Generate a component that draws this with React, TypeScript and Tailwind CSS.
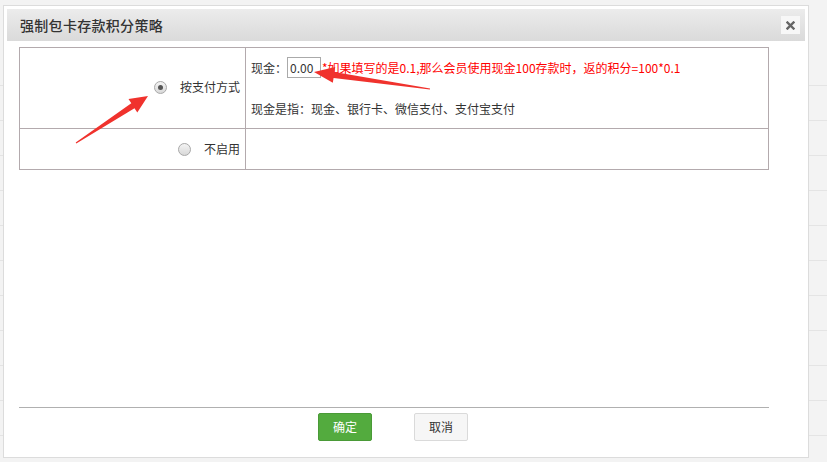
// Forced card deposit points strategy dialog
import React from 'react';

const font = { fontFamily: '"Noto Sans CJK SC", "Microsoft YaHei", "Liberation Sans", sans-serif' };

function Radio({ checked }: { checked?: boolean }) {
  return (
    <span className="w-[13px] h-[13px] rounded-full border border-[#a9a9a9] bg-gradient-to-b from-[#f4f4f4] to-[#d8d8d8] flex items-center justify-center shrink-0">
      {checked && <span className="w-[5px] h-[5px] rounded-full bg-[#555]" />}
    </span>
  );
}

export default function App() {
  const bgRows = Array.from({ length: 13 });

  return (
    <div className="relative w-[827px] h-[462px] overflow-hidden bg-[#f3f3f3] text-[#333]" style={font}>
      {/* page behind the modal */}
      <div className="flex flex-col pt-[51px]">
        {bgRows.map((_, i) => (
          <div key={i} className="h-[35px] border-b border-[#e4e4e4]" />
        ))}
      </div>

      {/* modal */}
      <div className="absolute left-[3px] top-[5px] w-[806px] h-[453px] bg-white border border-[#dcdcdc] p-[3px] flex flex-col">
        <div className="h-[32px] bg-gradient-to-b from-[#ececec] to-[#dadada] flex items-center justify-between pl-[13px] pr-[5px]">
          <span className="text-[14px] font-medium text-[#333] tracking-[0.3px]">强制包卡存款积分策略</span>
          <button className="w-[19px] h-[18px] bg-[#f7f7f7] flex items-center justify-center">
            <svg width="9" height="9" viewBox="0 0 9 9">
              <path d="M1.5 1.5 L7.5 7.5 M7.5 1.5 L1.5 7.5" stroke="#666" strokeWidth="2.4" strokeLinecap="square" />
            </svg>
          </button>
        </div>

        <div className="flex flex-col flex-1 pl-[12px] w-[762px]">
          <table className="mt-[6px] w-[750px] border-collapse text-[12px]">
            <tbody>
              <tr className="h-[81px]">
                <td className="w-[226px] border border-[#b3aaad] pr-[5px]">
                  <div className="flex items-center justify-end gap-[13px] pb-[2px]">
                    <Radio checked />
                    <span>按支付方式</span>
                  </div>
                </td>
                <td className="border border-[#b3aaad] pl-[5px] align-top">
                  <div className="flex items-center mt-[9px] h-[21px]">
                    <span>现金：</span>
                    <input
                      readOnly
                      value="0.00"
                      className="w-[34px] h-[21px] border border-[#aaa] px-[2px] text-[12px] outline-none"
                      style={font}
                    />
                    <span className="text-[#ff0000] ml-[1px]">*如果填写的是0.1,那么会员使用现金100存款时，返的积分=100*0.1</span>
                  </div>
                  <div className="mt-[22px]">现金是指：现金、银行卡、微信支付、支付宝支付</div>
                </td>
              </tr>
              <tr className="h-[41px]">
                <td className="border border-[#b3aaad] pr-[5px]">
                  <div className="flex items-center justify-end gap-[13px]">
                    <Radio />
                    <span>不启用</span>
                  </div>
                </td>
                <td className="border border-[#b3aaad]" />
              </tr>
            </tbody>
          </table>

          <div className="flex-1" />
          <div className="h-px w-[750px] bg-[#b0b0b0]" />
          <div className="flex gap-[42px] pl-[299px] mt-[5px] mb-[13px]">
            <button className="w-[54px] h-[28px] rounded-[2px] bg-[#53ab3e] border border-[#4a9a37] text-white text-[12px]">确定</button>
            <button className="w-[54px] h-[28px] rounded-[2px] bg-[#f6f6f6] border border-[#dadada] text-[#333] text-[12px]">取消</button>
          </div>
        </div>
      </div>

      {/* annotation arrows */}
      <svg className="absolute inset-0 pointer-events-none" width="827" height="462">
        <polygon
          points="76.3,143.4 134.5,108.3 137.3,112.5 148,96 128.5,99.1 131.3,103.3 75.7,142.6"
          fill="#f0322d"
        />
        <polygon
          points="430.1,88.5 334.4,71.9 335.2,67.0 314,72 332.8,82.8 333.6,77.9 429.9,89.5"
          fill="#f0322d"
        />
      </svg>
    </div>
  );
}
